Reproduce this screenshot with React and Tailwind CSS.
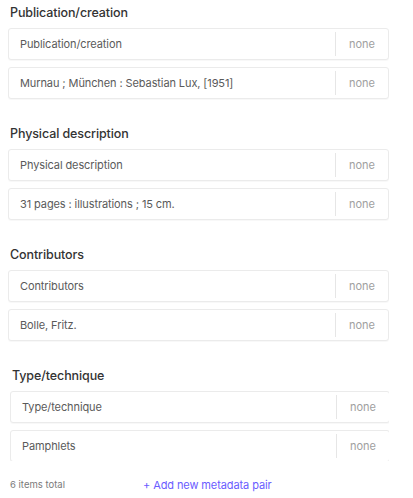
import React from 'react';

const sections = [
    { title: 'Publication/creation', values: ['Publication/creation', 'Murnau ; München : Sebastian Lux, [1951]'] },
    { title: 'Physical description', values: ['Physical description', '31 pages : illustrations ; 15 cm.'] },
    { title: 'Contributors', values: ['Contributors', 'Bolle, Fritz.'] },
    { title: 'Type/technique', values: ['Type/technique', 'Pamphlets'] },
];

const Row = ({ value }) => (
    <div className="flex items-center h-[32px] border border-[#ebebeb] rounded-[3px] bg-white shadow-[0_1px_1px_rgba(0,0,0,0.03)]">
        <div className="flex-1 pl-[11px] text-[11px] tracking-[-0.1px] text-[#5a5a5a] truncate">{value}</div>
        <div className="w-px h-[24px] bg-[#e6e6e6]"></div>
        <div className="w-[52px] text-center text-[11px] text-[#a0a0a0]">none</div>
    </div>
);

const App = () => {
    return (
        <div className="w-[413px] h-[498px] bg-white overflow-hidden flex flex-col" style={{ fontFamily: 'Inter, "Noto Sans", sans-serif' }}>
            <div className="pl-[8px] w-[389px] flex flex-col gap-[25px] pt-[3px] h-[461px] shrink-0 overflow-hidden">
                {sections.map((s, i) => (
                    <div key={s.title} className={i === 3 ? 'pl-[2px] -mr-[1px]' : ''}>
                        <h3 className="text-[12.5px] leading-[20px] font-medium text-[#333] pl-[2px] mb-[5px] tracking-[-0.1px]">{s.title}</h3>
                        <div className="flex flex-col gap-[7px]">
                            {s.values.map((v, j) => (
                                <Row key={j} value={v} />
                            ))}
                        </div>
                    </div>
                ))}
            </div>
            <div className="flex items-center pt-[16px] pl-[10px]">
                <span className="text-[9.5px] text-[#7a7a7a] w-[133px]">6 items total</span>
                <button className="text-[11px] tracking-[-0.1px] text-[#6a5cff]">+ Add new metadata pair</button>
            </div>
        </div>
    );
};

export default App;
